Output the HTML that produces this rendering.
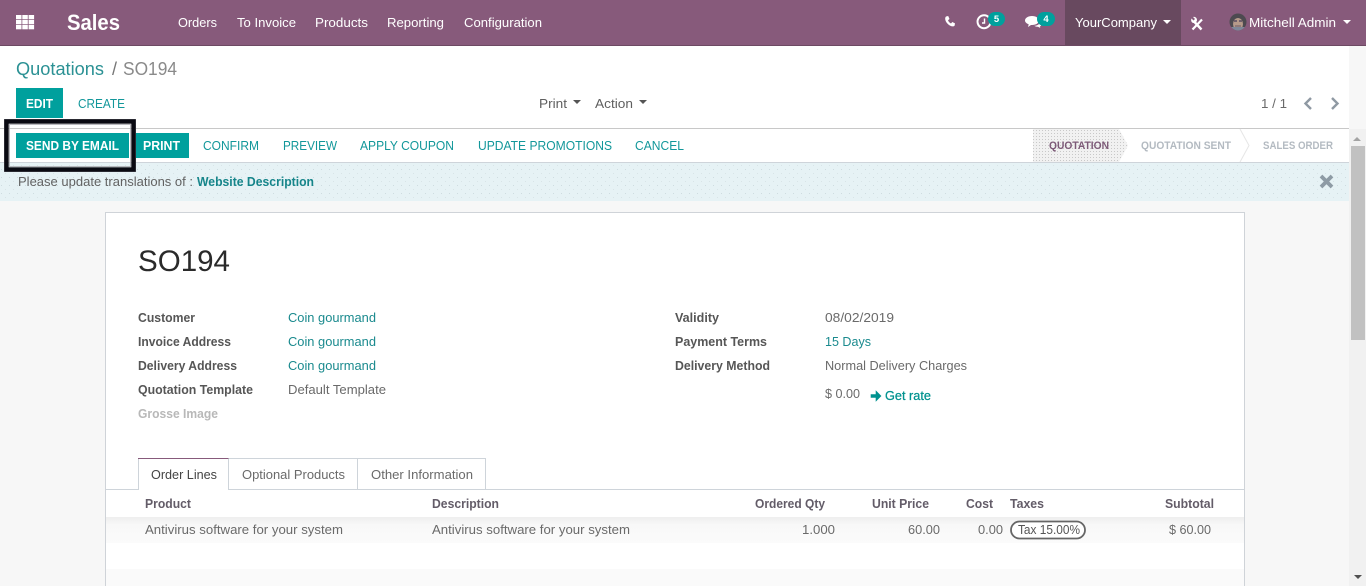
<!DOCTYPE html>
<html><head><meta charset="utf-8"><title>SO194</title>
<style>
html,body{margin:0;padding:0;width:1366px;height:586px;overflow:hidden;background:#f7f7f7}
svg{display:block}
text{font-family:"Liberation Sans",sans-serif;font-size:13px;fill:#6a6a6a}
.n{fill:#fff;font-size:13px}
.b{font-weight:bold}
.l{font-weight:bold;fill:#565656;font-size:12.5px}
.t{fill:#1a8a8e}
.a{fill:#12979a;font-size:12.5px}
.h{font-weight:bold;fill:#635c68;font-size:12.5px}
.w{fill:#fff;font-weight:bold;font-size:12.5px}
.s{font-weight:bold;fill:#b3bac1;font-size:11px}
</style></head><body>
<svg width="1366" height="586" viewBox="0 0 1366 586" xmlns="http://www.w3.org/2000/svg">
<defs>
<pattern id="d" width="8" height="8" patternUnits="userSpaceOnUse"><rect x="1" y="1" width="1" height="1" fill="#b9c9cf" opacity=".55"/><rect x="5" y="5" width="1" height="1" fill="#c9d6da" opacity=".5"/></pattern>
<pattern id="q" width="3" height="3" patternUnits="userSpaceOnUse"><rect width="3" height="3" fill="#f1f1f1"/><rect x="1" y="1" width="1" height="1" fill="#c8c8c8"/></pattern>
<linearGradient id="r" x1="0" y1="0" x2="0" y2="1"><stop offset="0" stop-color="#eeeeee"/><stop offset=".3" stop-color="#f8f8f8"/><stop offset="1" stop-color="#fbfbfb"/></linearGradient>
<clipPath id="av"><circle cx="1238" cy="22" r="8.500"/></clipPath>
</defs>

<!-- page -->
<rect width="1366" height="586" fill="#f7f7f7"/>
<rect y="46" width="1349" height="83" fill="#fff"/>

<!-- navbar -->
<rect width="1366" height="45" fill="#875a7b"/>
<rect y="45" width="1366" height="1" fill="#6d4a63"/>
<rect x="1065" width="116" height="45" fill="#68495f"/>
<g fill="#fff">
<rect x="16" y="15" width="5.500" height="4.300"/><rect x="22.300" y="15" width="5.500" height="4.300"/><rect x="28.600" y="15" width="5.500" height="4.300"/>
<rect x="16" y="20" width="5.500" height="4.300"/><rect x="22.300" y="20" width="5.500" height="4.300"/><rect x="28.600" y="20" width="5.500" height="4.300"/>
<rect x="16" y="25" width="5.500" height="4.300"/><rect x="22.300" y="25" width="5.500" height="4.300"/><rect x="28.600" y="25" width="5.500" height="4.300"/>
</g>
<text x="67" y="30" class="b" style="fill:#fff;font-size:22px" textLength="53" lengthAdjust="spacingAndGlyphs">Sales</text>
<text x="178" y="27" class="n" textLength="39" lengthAdjust="spacingAndGlyphs">Orders</text>
<text x="237" y="27" class="n" textLength="59" lengthAdjust="spacingAndGlyphs">To Invoice</text>
<text x="315" y="27" class="n" textLength="53" lengthAdjust="spacingAndGlyphs">Products</text>
<text x="387" y="27" class="n" textLength="57" lengthAdjust="spacingAndGlyphs">Reporting</text>
<text x="464" y="27" class="n" textLength="78" lengthAdjust="spacingAndGlyphs">Configuration</text>

<!-- systray -->
<path d="M946 16.500l2.200-.5 1.300 3-1.500 1.300c.5 1.400 1.500 2.500 3 3.200l1.300-1.500 2.700 1.400-.4 2.200c-1 1-2.600 1-4.300.1-2.500-1.300-4.500-3.700-5-6-.3-1.500 0-2.500.7-3.200z" fill="#fff"/>
<path d="M989 17.500a6.500 6.500 0 1 0 1.500 5" fill="none" stroke="#fff" stroke-width="2"/>
<path d="M984.500 18.500v4.500h-2.500" fill="none" stroke="#fff" stroke-width="1.400"/>
<rect x="988" y="12" width="17" height="14" rx="7" fill="#00a09d"/>
<text x="996.500" y="22" text-anchor="middle" class="b" style="fill:#fff;font-size:9.500px">5</text>
<path d="M1032 16c4 0 7 2 7 4.500s-3 4.500-7 4.500l-1 0-3 2 .7-2.700c-2-.7-3.700-2-3.700-3.800 0-2.500 3-4.500 7-4.500z" fill="#fff"/>
<path d="M1040 22c1 .6 1.500 1.500 1.500 2.300 0 1-.7 1.800-1.700 2.300l.5 1.400-2.300-1.200c-1.500 0-2.800-.3-3.700-1 3 0 5.500-1.600 5.700-3.800z" fill="#fff"/>
<rect x="1037" y="12" width="18" height="14" rx="7" fill="#00a09d"/>
<text x="1046" y="22" text-anchor="middle" class="b" style="fill:#fff;font-size:9.500px">4</text>
<text x="1075" y="27" class="n" textLength="82" lengthAdjust="spacingAndGlyphs">YourCompany</text>
<path d="M1163 20h8l-4 4z" fill="#fff"/>
<!-- tools -->
<path d="M1192.500 29.500l9.500-10" stroke="#fff" stroke-width="2.200" fill="none"/>
<path d="M1201.500 29.500l-7-7.500" stroke="#fff" stroke-width="2.400" fill="none"/>
<path d="M1191.500 18.500l2 2 1.500-1.500-2-2c2-.6 4 .8 4 3 0 1.800-1.800 3.400-3.700 3-2-.4-2.600-2.600-1.800-4.500z" fill="#fff"/>
<!-- avatar -->
<g clip-path="url(#av)">
<rect x="1229" y="13" width="18" height="18" fill="#4d4a50"/>
<ellipse cx="1238" cy="24" rx="5" ry="6" fill="#b59a8a"/>
<rect x="1234" y="20" width="3" height="2" fill="#6f5f6b"/>
<rect x="1239" y="20" width="3" height="2" fill="#6f5f6b"/>
<rect x="1235" y="25" width="6" height="2" fill="#8f7a78"/>
<rect x="1230" y="27" width="16" height="5" fill="#7f8799"/>
</g>
<text x="1249" y="27" class="n" textLength="87" lengthAdjust="spacingAndGlyphs">Mitchell Admin</text>
<path d="M1343 20h8l-4 4z" fill="#fff"/>

<!-- breadcrumb -->
<text x="16" y="75" style="fill:#2b9194;font-size:18px" textLength="88" lengthAdjust="spacingAndGlyphs">Quotations</text>
<text x="112" y="75" style="font-size:18px;fill:#777">/</text>
<text x="123" y="75" style="font-size:18px;fill:#8a8a8a" textLength="54" lengthAdjust="spacingAndGlyphs">SO194</text>

<!-- control buttons -->
<rect x="16" y="88" width="47" height="30" fill="#00a09d"/>
<text x="26" y="108" class="w" textLength="27" lengthAdjust="spacingAndGlyphs">EDIT</text>
<text x="78" y="108" class="a" textLength="47" lengthAdjust="spacingAndGlyphs">CREATE</text>
<text x="539" y="108" style="fill:#5f5f5f" textLength="28" lengthAdjust="spacingAndGlyphs">Print</text>
<path d="M573 100h8l-4 4z" fill="#555"/>
<text x="595" y="108" style="fill:#5f5f5f" textLength="38" lengthAdjust="spacingAndGlyphs">Action</text>
<path d="M639 100h8l-4 4z" fill="#555"/>
<text x="1261" y="108" textLength="26" lengthAdjust="spacingAndGlyphs">1 / 1</text>
<path d="M1311 98l-5.500 5.500 5.500 5.500" fill="none" stroke="#8f99a3" stroke-width="2.400"/>
<path d="M1332 98l5.500 5.500-5.500 5.500" fill="none" stroke="#8f99a3" stroke-width="2.400"/>

<!-- statusbar -->
<rect y="128" width="1349" height="1" fill="#c8c8c8"/>
<rect y="129" width="1349" height="33" fill="#fff"/>
<rect y="162" width="1349" height="1" fill="#ced4da"/>
<rect x="16" y="133" width="113" height="25" fill="#00a09d"/>
<text x="26" y="150" class="w" textLength="93" lengthAdjust="spacingAndGlyphs">SEND BY EMAIL</text>
<rect x="136" y="133" width="53" height="25" fill="#00a09d"/>
<text x="143" y="150" class="w" textLength="37" lengthAdjust="spacingAndGlyphs">PRINT</text>
<text x="203" y="150" class="a" textLength="56" lengthAdjust="spacingAndGlyphs">CONFIRM</text>
<text x="283" y="150" class="a" textLength="54" lengthAdjust="spacingAndGlyphs">PREVIEW</text>
<text x="360" y="150" class="a" textLength="94" lengthAdjust="spacingAndGlyphs">APPLY COUPON</text>
<text x="478" y="150" class="a" textLength="134" lengthAdjust="spacingAndGlyphs">UPDATE PROMOTIONS</text>
<text x="635" y="150" class="a" textLength="49" lengthAdjust="spacingAndGlyphs">CANCEL</text>

<path d="M1033 129h86l9 16.500-9 16.500h-86z" fill="url(#q)"/>
<path d="M1240 129l9 16.500-9 16.500" fill="none" stroke="#e6e6e6"/>
<text x="1049" y="149" class="s" style="fill:#7d5a78" textLength="60" lengthAdjust="spacingAndGlyphs">QUOTATION</text>
<text x="1141" y="149" class="s" textLength="90" lengthAdjust="spacingAndGlyphs">QUOTATION SENT</text>
<text x="1263" y="149" class="s" textLength="70" lengthAdjust="spacingAndGlyphs">SALES ORDER</text>

<!-- alert -->
<rect y="163" width="1349" height="38" fill="#e6f2f5"/>
<rect y="163" width="1349" height="38" fill="url(#d)"/>
<text x="18" y="186" style="fill:#626262" textLength="175" lengthAdjust="spacingAndGlyphs">Please update translations of :</text>
<text x="197" y="186" class="b" style="fill:#16858a;font-size:12.500px" textLength="117" lengthAdjust="spacingAndGlyphs">Website Description</text>
<path d="M1321 176l11 11M1332 176l-11 11" stroke="#8e9ba5" stroke-width="3.800" fill="none"/>

<!-- highlight box -->
<rect x="4.500" y="119.500" width="131" height="52" fill="none" stroke="#77777f"/>
<rect x="6.500" y="121.500" width="127" height="48" fill="none" stroke="#0a0a12" stroke-width="4.400"/>
<rect x="9.500" y="124.500" width="121" height="42" fill="none" stroke="#a9a9b0" stroke-width=".8"/>

<!-- sheet -->
<rect x="105.500" y="212.500" width="1139" height="380" fill="#fff" stroke="#cfd3d8"/>
<text x="138" y="271" style="fill:#2a2a2a;font-size:30px" textLength="92" lengthAdjust="spacingAndGlyphs">SO194</text>

<text x="138" y="322" class="l" textLength="57" lengthAdjust="spacingAndGlyphs">Customer</text>
<text x="138" y="346" class="l" textLength="93" lengthAdjust="spacingAndGlyphs">Invoice Address</text>
<text x="138" y="370" class="l" textLength="99" lengthAdjust="spacingAndGlyphs">Delivery Address</text>
<text x="138" y="394" class="l" textLength="115" lengthAdjust="spacingAndGlyphs">Quotation Template</text>
<text x="138" y="418" class="l" style="fill:#b8b8b8" textLength="80" lengthAdjust="spacingAndGlyphs">Grosse Image</text>
<text x="288" y="322" class="t" textLength="88" lengthAdjust="spacingAndGlyphs">Coin gourmand</text>
<text x="288" y="346" class="t" textLength="88" lengthAdjust="spacingAndGlyphs">Coin gourmand</text>
<text x="288" y="370" class="t" textLength="88" lengthAdjust="spacingAndGlyphs">Coin gourmand</text>
<text x="288" y="394" textLength="98" lengthAdjust="spacingAndGlyphs">Default Template</text>

<text x="675" y="322" class="l" textLength="44" lengthAdjust="spacingAndGlyphs">Validity</text>
<text x="675" y="346" class="l" textLength="92" lengthAdjust="spacingAndGlyphs">Payment Terms</text>
<text x="675" y="370" class="l" textLength="95" lengthAdjust="spacingAndGlyphs">Delivery Method</text>
<text x="825" y="322" textLength="69" lengthAdjust="spacingAndGlyphs">08/02/2019</text>
<text x="825" y="346" class="t" textLength="46" lengthAdjust="spacingAndGlyphs">15 Days</text>
<text x="825" y="370" textLength="142" lengthAdjust="spacingAndGlyphs">Normal Delivery Charges</text>
<text x="825" y="398" textLength="35" lengthAdjust="spacingAndGlyphs">$ 0.00</text>
<path d="M871 394.500h5v-3.500l5 5-5 5v-3.500h-5z" fill="#00928f" stroke="#00928f" stroke-width=".6"/>
<text x="885" y="400" style="fill:#00928f;font-size:13px;stroke:#00928f;stroke-width:.25" textLength="46" lengthAdjust="spacingAndGlyphs">Get rate</text>

<!-- tabs -->
<rect x="106" y="489" width="1138" height="1" fill="#ced4da"/>
<path d="M138.500 490V458.500H228.500V490" fill="#fff" stroke="#ced4da"/>
<rect x="138" y="458" width="91" height="1" fill="#875a7b"/>
<rect x="139" y="489" width="89" height="1" fill="#fff"/>
<path d="M228.500 458.500H357.500V489M357.500 458.500H485.500V489" fill="none" stroke="#ced4da"/>
<text x="151" y="479" style="fill:#444" textLength="66" lengthAdjust="spacingAndGlyphs">Order Lines</text>
<text x="242" y="479" textLength="103" lengthAdjust="spacingAndGlyphs">Optional Products</text>
<text x="371" y="479" textLength="102" lengthAdjust="spacingAndGlyphs">Other Information</text>

<!-- table -->
<text x="145" y="508" class="h" textLength="46" lengthAdjust="spacingAndGlyphs">Product</text>
<text x="432" y="508" class="h" textLength="67" lengthAdjust="spacingAndGlyphs">Description</text>
<text x="755" y="508" class="h" textLength="70" lengthAdjust="spacingAndGlyphs">Ordered Qty</text>
<text x="872" y="508" class="h" textLength="57" lengthAdjust="spacingAndGlyphs">Unit Price</text>
<text x="966" y="508" class="h" textLength="27" lengthAdjust="spacingAndGlyphs">Cost</text>
<text x="1010" y="508" class="h" textLength="34" lengthAdjust="spacingAndGlyphs">Taxes</text>
<text x="1165" y="508" class="h" textLength="49" lengthAdjust="spacingAndGlyphs">Subtotal</text>

<rect x="106" y="517" width="1138" height="26" fill="url(#r)"/>
<text x="145" y="534" textLength="198" lengthAdjust="spacingAndGlyphs">Antivirus software for your system</text>
<text x="432" y="534" textLength="198" lengthAdjust="spacingAndGlyphs">Antivirus software for your system</text>
<text x="802" y="534" textLength="33" lengthAdjust="spacingAndGlyphs">1.000</text>
<text x="908" y="534" textLength="32" lengthAdjust="spacingAndGlyphs">60.00</text>
<text x="978" y="534" textLength="25" lengthAdjust="spacingAndGlyphs">0.00</text>
<rect x="1011" y="521.500" width="74" height="17" rx="8.500" fill="#fff" stroke="#666" stroke-width="1.800"/>
<text x="1018" y="534" style="fill:#555;font-size:12.500px" textLength="62" lengthAdjust="spacingAndGlyphs">Tax 15.00%</text>
<text x="1169" y="534" textLength="42" lengthAdjust="spacingAndGlyphs">$ 60.00</text>
<rect x="106" y="569" width="1138" height="17" fill="#fafafa"/>

<!-- scrollbar -->
<rect x="1349" y="129" width="17" height="457" fill="#f1f1f1"/>
<rect x="1351" y="146" width="14" height="194" fill="#c1c1c1"/>
<path d="M1353 141l4-4 4 4z" fill="#a3a3a3"/>
<path d="M1354 575h8l-4 4z" fill="#505050"/>
</svg>
</body></html>
